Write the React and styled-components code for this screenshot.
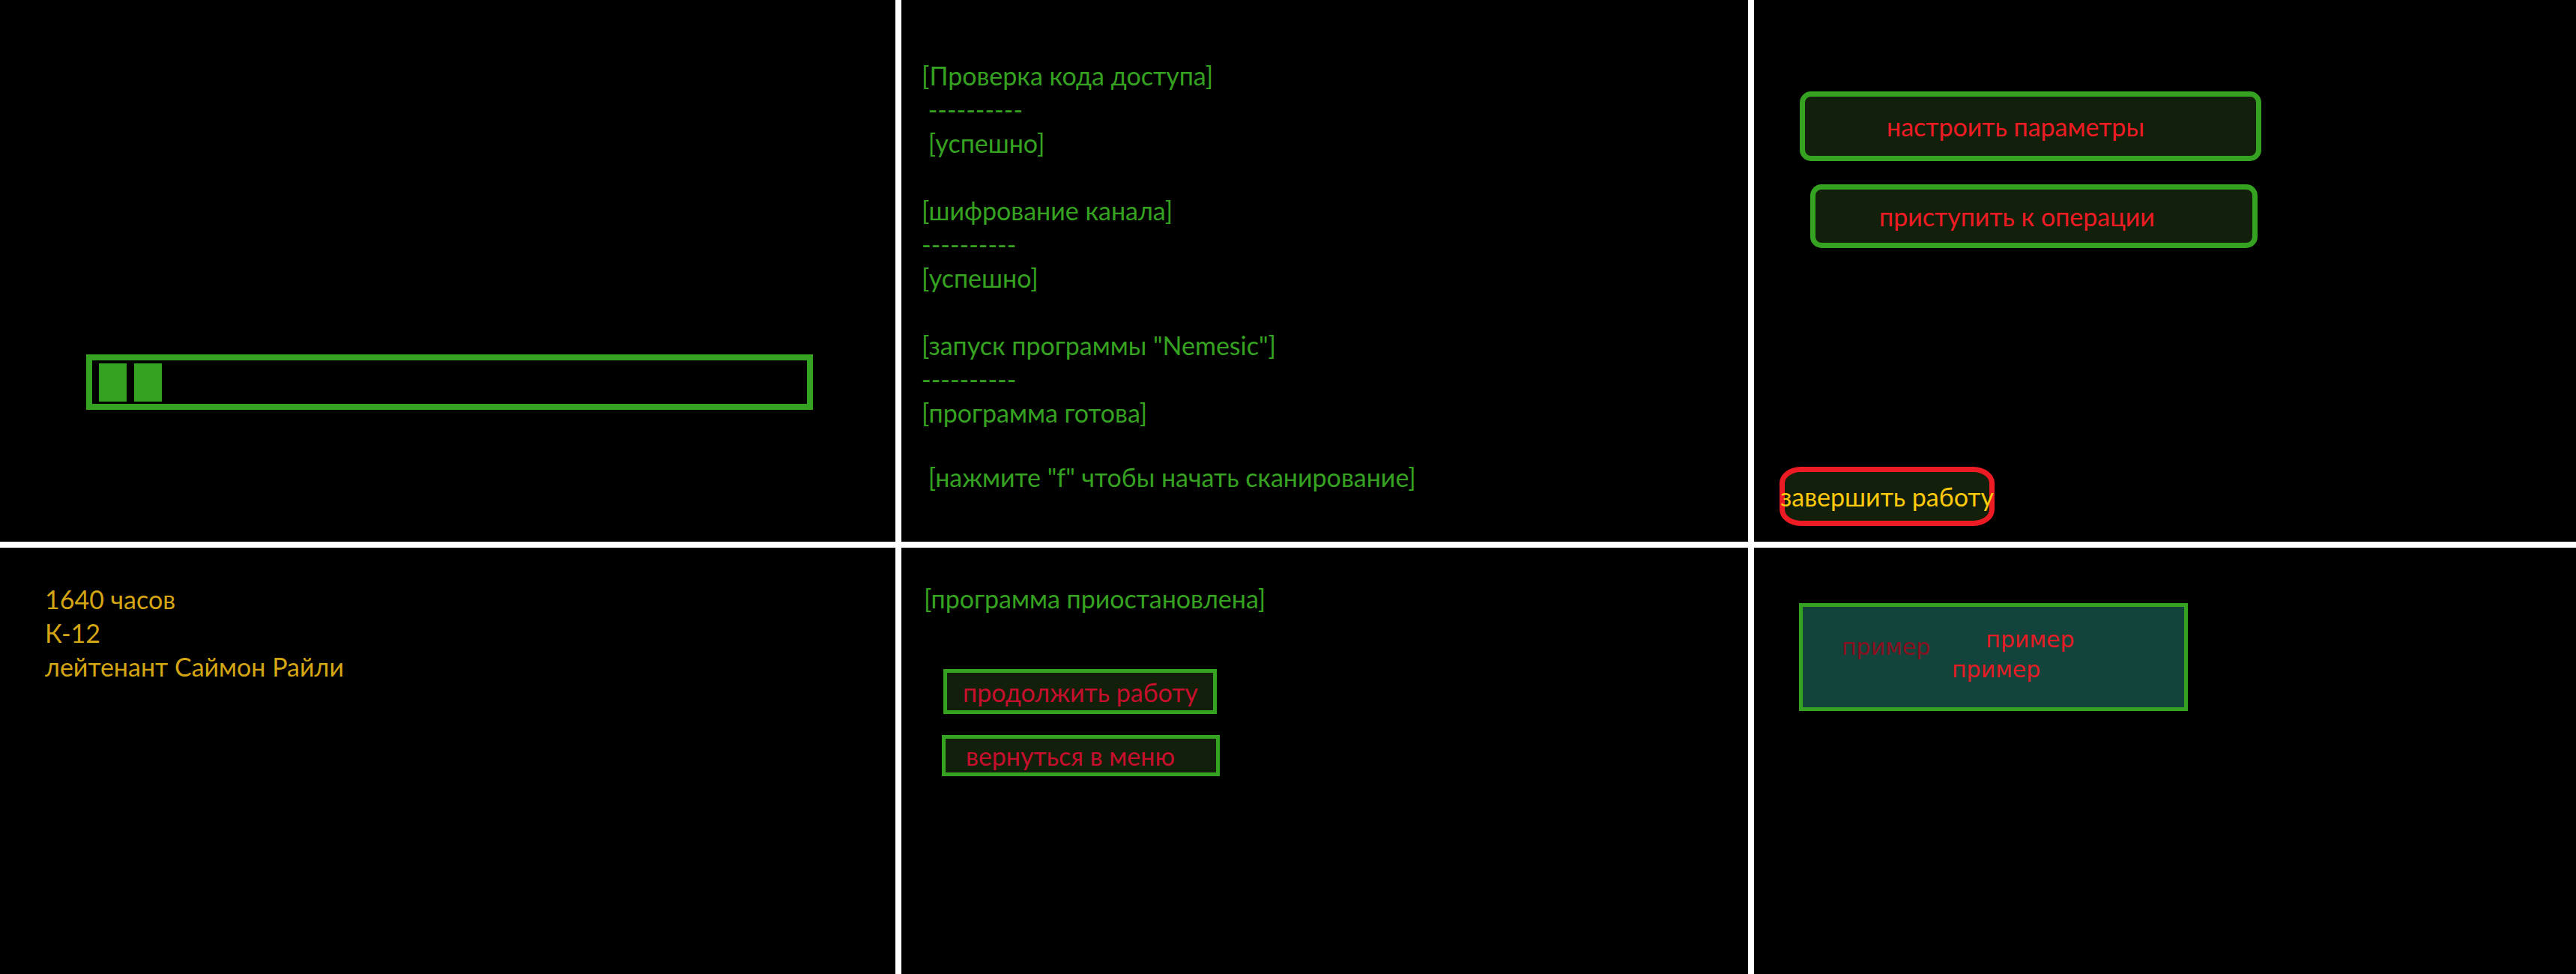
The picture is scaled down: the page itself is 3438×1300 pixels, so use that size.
import styled, { createGlobalStyle } from 'styled-components';

const GlobalStyle = createGlobalStyle`
  html, body {
    margin: 0;
    padding: 0;
    background: #fff;
  }
  body {
    font-family: Lato, 'Open Sans', sans-serif;
  }
`;

const green = '#36a221';
const panelFill = '#121f0b';

const Screen = styled.main`
  display: grid;
  grid-template-columns: 1195px 1130px 1fr;
  grid-template-rows: 723px 1fr;
  gap: 8px;
  width: 3438px;
  height: 1300px;
  background: #fff;
`;

const Panel = styled.section`
  box-sizing: border-box;
  display: flex;
  flex-direction: column;
  align-items: flex-start;
  padding: ${p => p.$pad};
  background: #000;
  overflow: hidden;
`;

/* loading bar */
const Loader = styled.div`
  box-sizing: border-box;
  display: flex;
  gap: 10px;
  width: 970px;
  height: 74px;
  padding: 4px 9px 3px;
  border: 8px solid ${green};
`;

const Chunk = styled.span`
  width: 37px;
  height: 51px;
  background: ${green};
`;

/* terminal log */
const LogLine = styled.p`
  margin: 0;
  margin-top: ${p => p.$shift || 0}px;
  min-height: 45px;
  white-space: pre;
  font-size: 34px;
  line-height: 45px;
  color: ${p => p.$color || green};
`;

/* main menu */
const MenuButton = styled.button`
  box-sizing: border-box;
  display: flex;
  align-items: center;
  width: ${p => p.$w}px;
  height: ${p => p.$h}px;
  margin: ${p => p.$m};
  padding: 0 0 0 ${p => p.$indent}px;
  background: ${panelFill};
  border: 7px solid ${green};
  border-radius: 15px;
  font-family: Lato, 'Open Sans', sans-serif;
  font-size: 34px;
  color: #ed1c24;
  white-space: nowrap;
`;

const ExitButton = styled.button`
  box-sizing: border-box;
  display: flex;
  align-items: center;
  justify-content: center;
  width: 287px;
  height: 79px;
  margin: auto 0 0 34px;
  padding: 0;
  background: ${panelFill};
  border: 7px solid #ed1c24;
  border-radius: 28px / 22px;
  font-family: Lato, 'Open Sans', sans-serif;
  font-size: 34px;
  color: #ffc90e;
  white-space: nowrap;
  overflow: visible;
`;

/* pause menu */
const PauseButton = styled.button`
  box-sizing: border-box;
  display: flex;
  align-items: center;
  width: ${p => p.$w}px;
  height: ${p => p.$h}px;
  margin: ${p => p.$m};
  padding: 0 0 0 ${p => p.$indent}px;
  background: ${panelFill};
  border: 5px solid ${green};
  border-radius: 0;
  font-family: Lato, 'Open Sans', sans-serif;
  font-size: 34px;
  color: #c60f2c;
  white-space: nowrap;
`;

/* style sample */
const SampleBox = styled.div`
  box-sizing: border-box;
  width: 519px;
  height: 144px;
  margin: 74px 0 0 60px;
  padding-top: 29px;
  background: #12443b;
  border: 5px solid ${green};
`;

const SampleRow = styled.div`
  display: flex;
  align-items: flex-start;
`;

const Sample = styled.span`
  margin: ${p => p.$dy || 0}px 0 0 ${p => p.$dx}px;
  font-family: 'DejaVu Sans', sans-serif;
  font-size: 30px;
  line-height: 30px;
  color: ${p => (p.$dark ? '#8a0f1f' : '#e31c25')};
`;

const log = [
  '[Проверка кода доступа]',
  ' ----------',
  ' [успешно]',
  '',
  '[шифрование канала]',
  '----------',
  '[успешно]',
  '',
  '[запуск программы "Nemesic"]',
  '----------',
  '[программа готова]',
  '',
];

const App = () => (
  <>
    <GlobalStyle />
    <Screen>
      <Panel $pad="473px 0 0 115px">
        <Loader>
          <Chunk />
          <Chunk />
        </Loader>
      </Panel>

      <Panel $pad="78px 0 0 27px">
        {log.map((line, i) => (
          <LogLine key={i}>{line}</LogLine>
        ))}
        <LogLine $shift={-4}>{' [нажмите "f" чтобы начать сканирование]'}</LogLine>
      </Panel>

      <Panel $pad="122px 0 21px 0">
        <MenuButton $w={616} $h={93} $m="0 0 0 61px" $indent={109}>
          настроить параметры
        </MenuButton>
        <MenuButton $w={597} $h={85} $m="31px 0 0 75px" $indent={85}>
          приступить к операции
        </MenuButton>
        <ExitButton>завершить работу</ExitButton>
      </Panel>

      <Panel $pad="46px 0 0 60px">
        <LogLine $color="#d4a514">1640 часов</LogLine>
        <LogLine $color="#d4a514">К-12</LogLine>
        <LogLine $color="#d4a514">лейтенант Саймон Райли</LogLine>
      </Panel>

      <Panel $pad="45px 0 0 30px">
        <LogLine>[программа приостановлена]</LogLine>
        <PauseButton $w={365} $h={60} $m="72px 0 0 26px" $indent={21}>
          продолжить работу
        </PauseButton>
        <PauseButton $w={371} $h={55} $m="28px 0 0 24px" $indent={27}>
          вернуться в меню
        </PauseButton>
      </Panel>

      <Panel $pad="0">
        <SampleBox>
          <SampleRow>
            <Sample $dark $dx={52} $dy={10}>пример</Sample>
            <Sample $dx={74}>пример</Sample>
          </SampleRow>
          <SampleRow>
            <Sample $dx={199}>пример</Sample>
          </SampleRow>
        </SampleBox>
      </Panel>
    </Screen>
  </>
);

export default App;
